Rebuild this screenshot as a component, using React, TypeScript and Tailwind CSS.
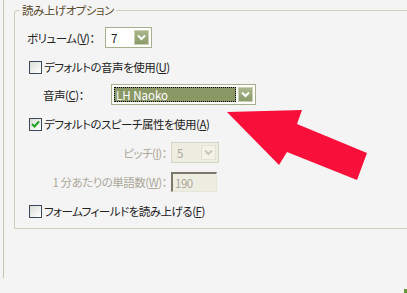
import React from "react";

const font = "font-['MS_UI_Gothic','Noto_Sans_CJK_JP',sans-serif] [font-feature-settings:'palt'] text-[11.5px] tracking-[-0.5px] leading-[14px]";

function Chevron({ color = "#ffffff" }: { color?: string }) {
  return (
    <svg width="9" height="7" viewBox="0 0 9 7">
      <path d="M1 1.5 L4.5 5 L8 1.5" fill="none" stroke={color} strokeWidth="2" />
    </svg>
  );
}

function ArrowBtn({ disabled }: { disabled?: boolean }) {
  return (
    <div
      className={
        disabled
          ? "w-[15px] h-full flex items-center justify-center border border-[#e2e0d2] bg-[#f3f2e9]"
          : "w-[15px] h-full flex items-center justify-center border border-[#c9d1b3] bg-gradient-to-b from-[#a8b68a] to-[#8c9b6a]"
      }
    >
      <Chevron color={disabled ? "#c9c7ba" : "#ffffff"} />
    </div>
  );
}

function CheckBox({ checked }: { checked?: boolean }) {
  return (
    <div className="w-[13px] h-[13px] shrink-0 border border-[#3b4a5a] bg-gradient-to-br from-[#dcdcd6] to-white flex items-center justify-center">
      {checked && (
        <svg width="9" height="9" viewBox="0 0 9 9">
          <path d="M1 4 L3.5 6.5 L8 1.5" fill="none" stroke="#21a121" strokeWidth="2" />
        </svg>
      )}
    </div>
  );
}

function U({ c }: { c: string }) {
  return <span className="underline underline-offset-[1px]">{c}</span>;
}

export default function App() {
  return (
    <div className={`relative w-[407px] h-[293px] overflow-hidden bg-[#f4f4f4] text-[#222222] ${font}`}>
      <div className="flex pl-[3px]">
        <div className="h-[278px] border-l border-[#c8c8b6]" />
        <div className="pl-[10px] pt-[10px]">
          <div className="relative w-[420px] h-[219px] border-t border-l border-b border-[#d0d0bf] rounded-tl-[4px] flex flex-col">
            <div className="absolute left-[5px] top-[-8px] px-[2px] bg-[#f4f4f4] text-[#5a4a2c]">読み上げオプション</div>

            <div className="flex items-center h-[21px] mt-[16px] pl-[12px]">
              <span className="w-[78px]">ボリューム(<U c="V" />)：</span>
              <div className="w-[47px] h-[21px] border border-[#a5b08c] bg-white flex items-center p-[2px]">
                <span className="flex-1 pl-[3px]">7</span>
                <ArrowBtn />
              </div>
            </div>

            <div className="flex items-center h-[20px] mt-[9px] pl-[14px] gap-[2px]">
              <CheckBox />
              <span>デフォルトの音声を使用(<U c="U" />)</span>
            </div>

            <div className="flex items-center h-[21px] mt-[7px] pl-[28px]">
              <span className="w-[68px]">音声(<U c="C" />)：</span>
              <div className="w-[145px] h-[21px] border border-[#a5b08c] bg-white flex items-center p-[2px] gap-[2px]">
                <div className="flex-1 h-full bg-[#8a9866] border border-dotted border-black text-white flex items-center pl-[1px] tracking-normal">LH Naoko</div>
                <ArrowBtn />
              </div>
            </div>

            <div className="flex items-center h-[20px] mt-[9px] pl-[14px] gap-[2px]">
              <CheckBox checked />
              <span>デフォルトのスピーチ属性を使用(<U c="A" />)</span>
            </div>

            <div className="flex items-center h-[21px] mt-[8px] pl-[28px] text-[#aca899]">
              <span className="w-[128px] pr-[4px] text-right">ピッチ(<U c="I" />)：</span>
              <div className="w-[48px] h-[21px] border border-[#d6d4c6] bg-[#eeede2] flex items-center p-[2px]">
                <span className="flex-1 pl-[3px]">5</span>
                <ArrowBtn disabled />
              </div>
            </div>

            <div className="flex items-center h-[20px] mt-[9px] pl-[28px] text-[#aca899]">
              <span className="w-[128px] pr-[4px] text-right">1 分あたりの単語数(<U c="W" />)：</span>
              <div className="w-[46px] h-[20px] border-t-2 border-l-2 border-b border-r border-t-[#7a7868] border-l-[#7a7868] border-b-[#e8e6da] border-r-[#e8e6da] bg-[#eeede2] flex items-center pl-[2px]">
                190
              </div>
            </div>

            <div className="flex items-center h-[20px] mt-[9px] pl-[14px] gap-[2px]">
              <CheckBox />
              <span>フォームフィールドを読み上げる(<U c="F" />)</span>
            </div>
          </div>
        </div>
      </div>

      <svg className="absolute left-0 top-0 pointer-events-none" width="407" height="293">
        <polygon
          points="227,112 302,110 297,124 367,153 357,180 287,152 279,165"
          fill="#f80f3a"
        />
        <rect x="404" y="289" width="3" height="4" fill="#6a9a3a" />
      </svg>
    </div>
  );
}
